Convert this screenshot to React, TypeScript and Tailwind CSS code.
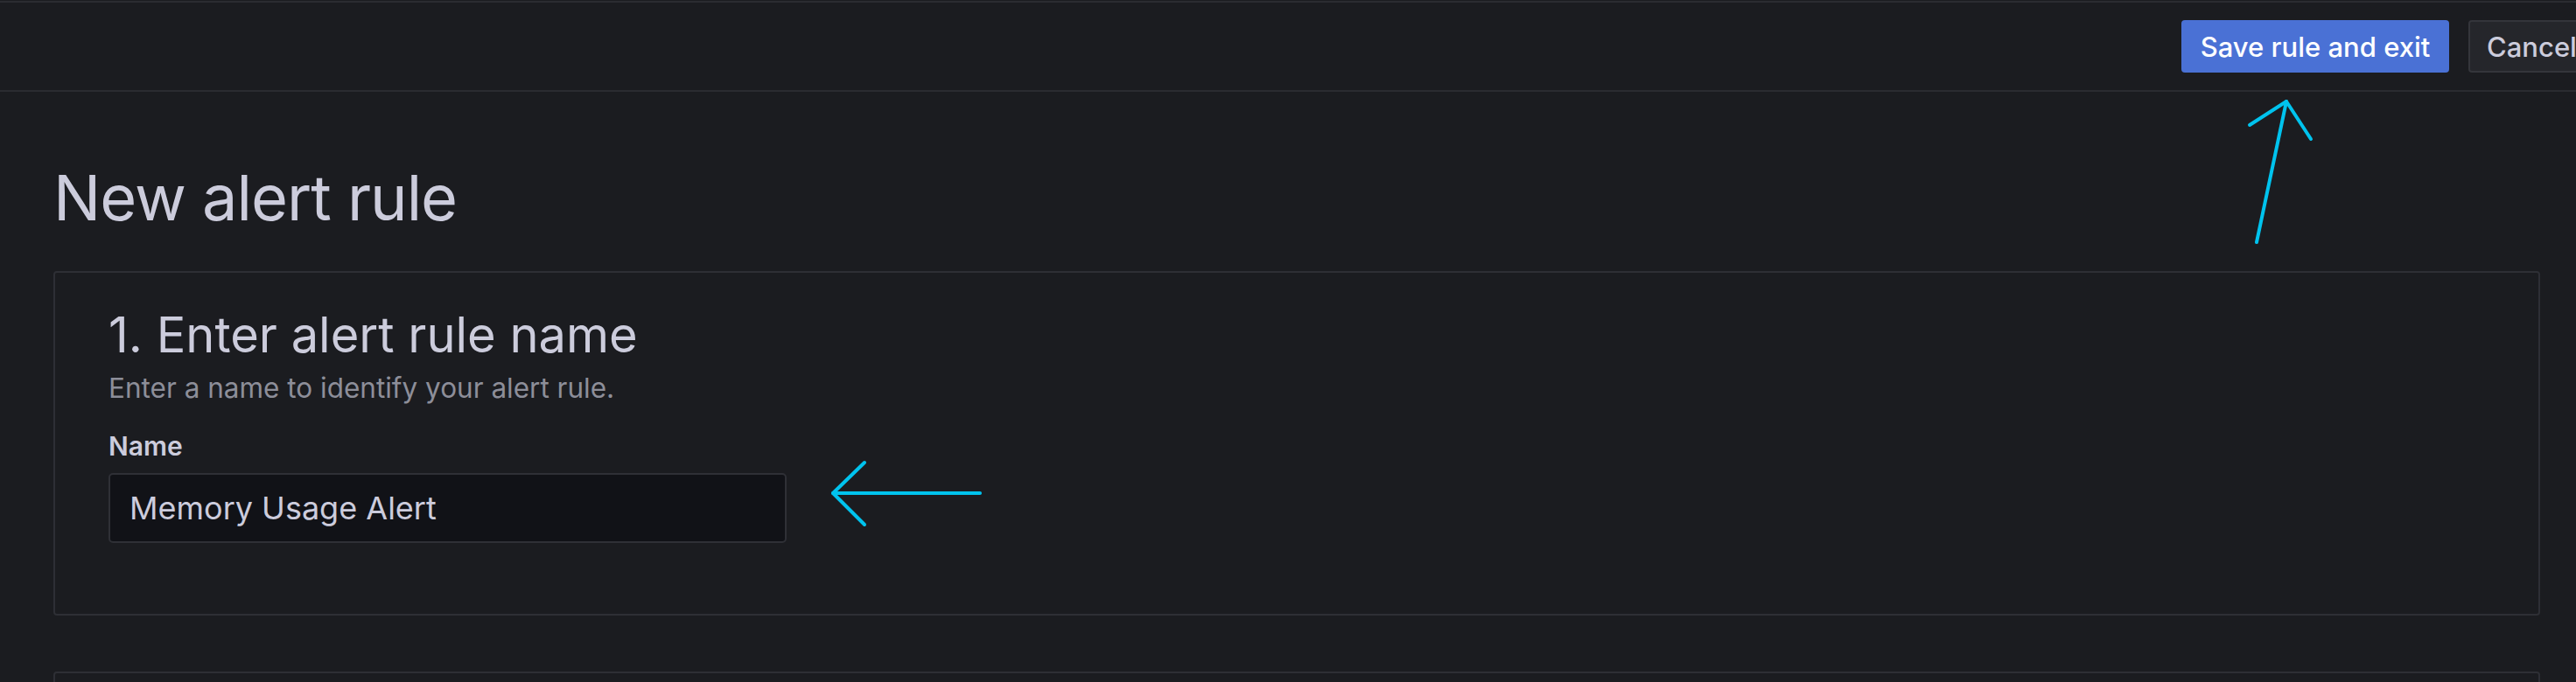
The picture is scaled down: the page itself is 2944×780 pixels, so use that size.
import React from "react";

export default function App() {
  return (
    <div className="relative w-[2944px] min-h-[780px] h-[780px] overflow-hidden bg-[#1b1c20] pt-[1px] text-[#ccccdc]" style={{ fontFamily: "Inter, 'Noto Sans', sans-serif" }}>
      <header className="flex justify-end border-t-2 border-b-2 border-[#2b2c31] pt-[20px] pb-[20px]">
        <div className="flex gap-[22px] -mr-[27px] whitespace-nowrap">
          <button className="w-[306px] h-[60px] flex items-center justify-center rounded-[4px] bg-[#4a71d5] text-white text-[31px] font-medium leading-none">
            Save rule and exit
          </button>
          <button className="w-[150px] h-[60px] flex items-center justify-start pl-[19px] rounded-[4px] bg-[#25262b] border-2 border-[#34353b] text-[#ccccdc] text-[31px] font-medium leading-none">
            Cancel
          </button>
        </div>
      </header>
      <main className="pl-[61px] pr-[41px]">
        <h1 className="mt-[85px] text-[72px] tracking-[-1px] leading-none font-normal text-[#ccccdc]">New alert rule</h1>
        <section className="mt-[48px] border-2 border-[#2e2f35] rounded-[4px] pl-[61px] pt-[43px] pb-[81px]">
          <h2 className="text-[56px] leading-none font-normal text-[#ccccdc]">1. Enter alert rule name</h2>
          <p className="mt-[17px] text-[31.5px] leading-none text-[#8d8e99]">Enter a name to identify your alert rule.</p>
          <label className="block mt-[35px] text-[30px] leading-none font-semibold text-[#ccccdc]">Name</label>
          <div className="mt-[16px] w-[775px] h-[80px] flex items-center bg-[#111217] border-2 border-[#2f3036] rounded-[5px] pl-[22px]">
            <span className="text-[36px] leading-none text-[#ccccdc]">Memory Usage Alert</span>
          </div>
        </section>
        <section className="mt-[64px] h-[120px] border-2 border-[#2e2f35] rounded-[4px]"></section>
      </main>
      <svg className="absolute left-0 top-0 pointer-events-none" width="2944" height="780" viewBox="0 0 2944 780" fill="none" stroke="#00c3ee" strokeWidth="4" strokeLinecap="round" strokeLinejoin="round">
        <path d="M952 564 L1120 564" />
        <path d="M988 529 L952 564 L988 600" />
        <path d="M2579 277 L2613 116" />
        <path d="M2571 143 L2613 116 L2641 159" />
      </svg>
    </div>
  );
}
